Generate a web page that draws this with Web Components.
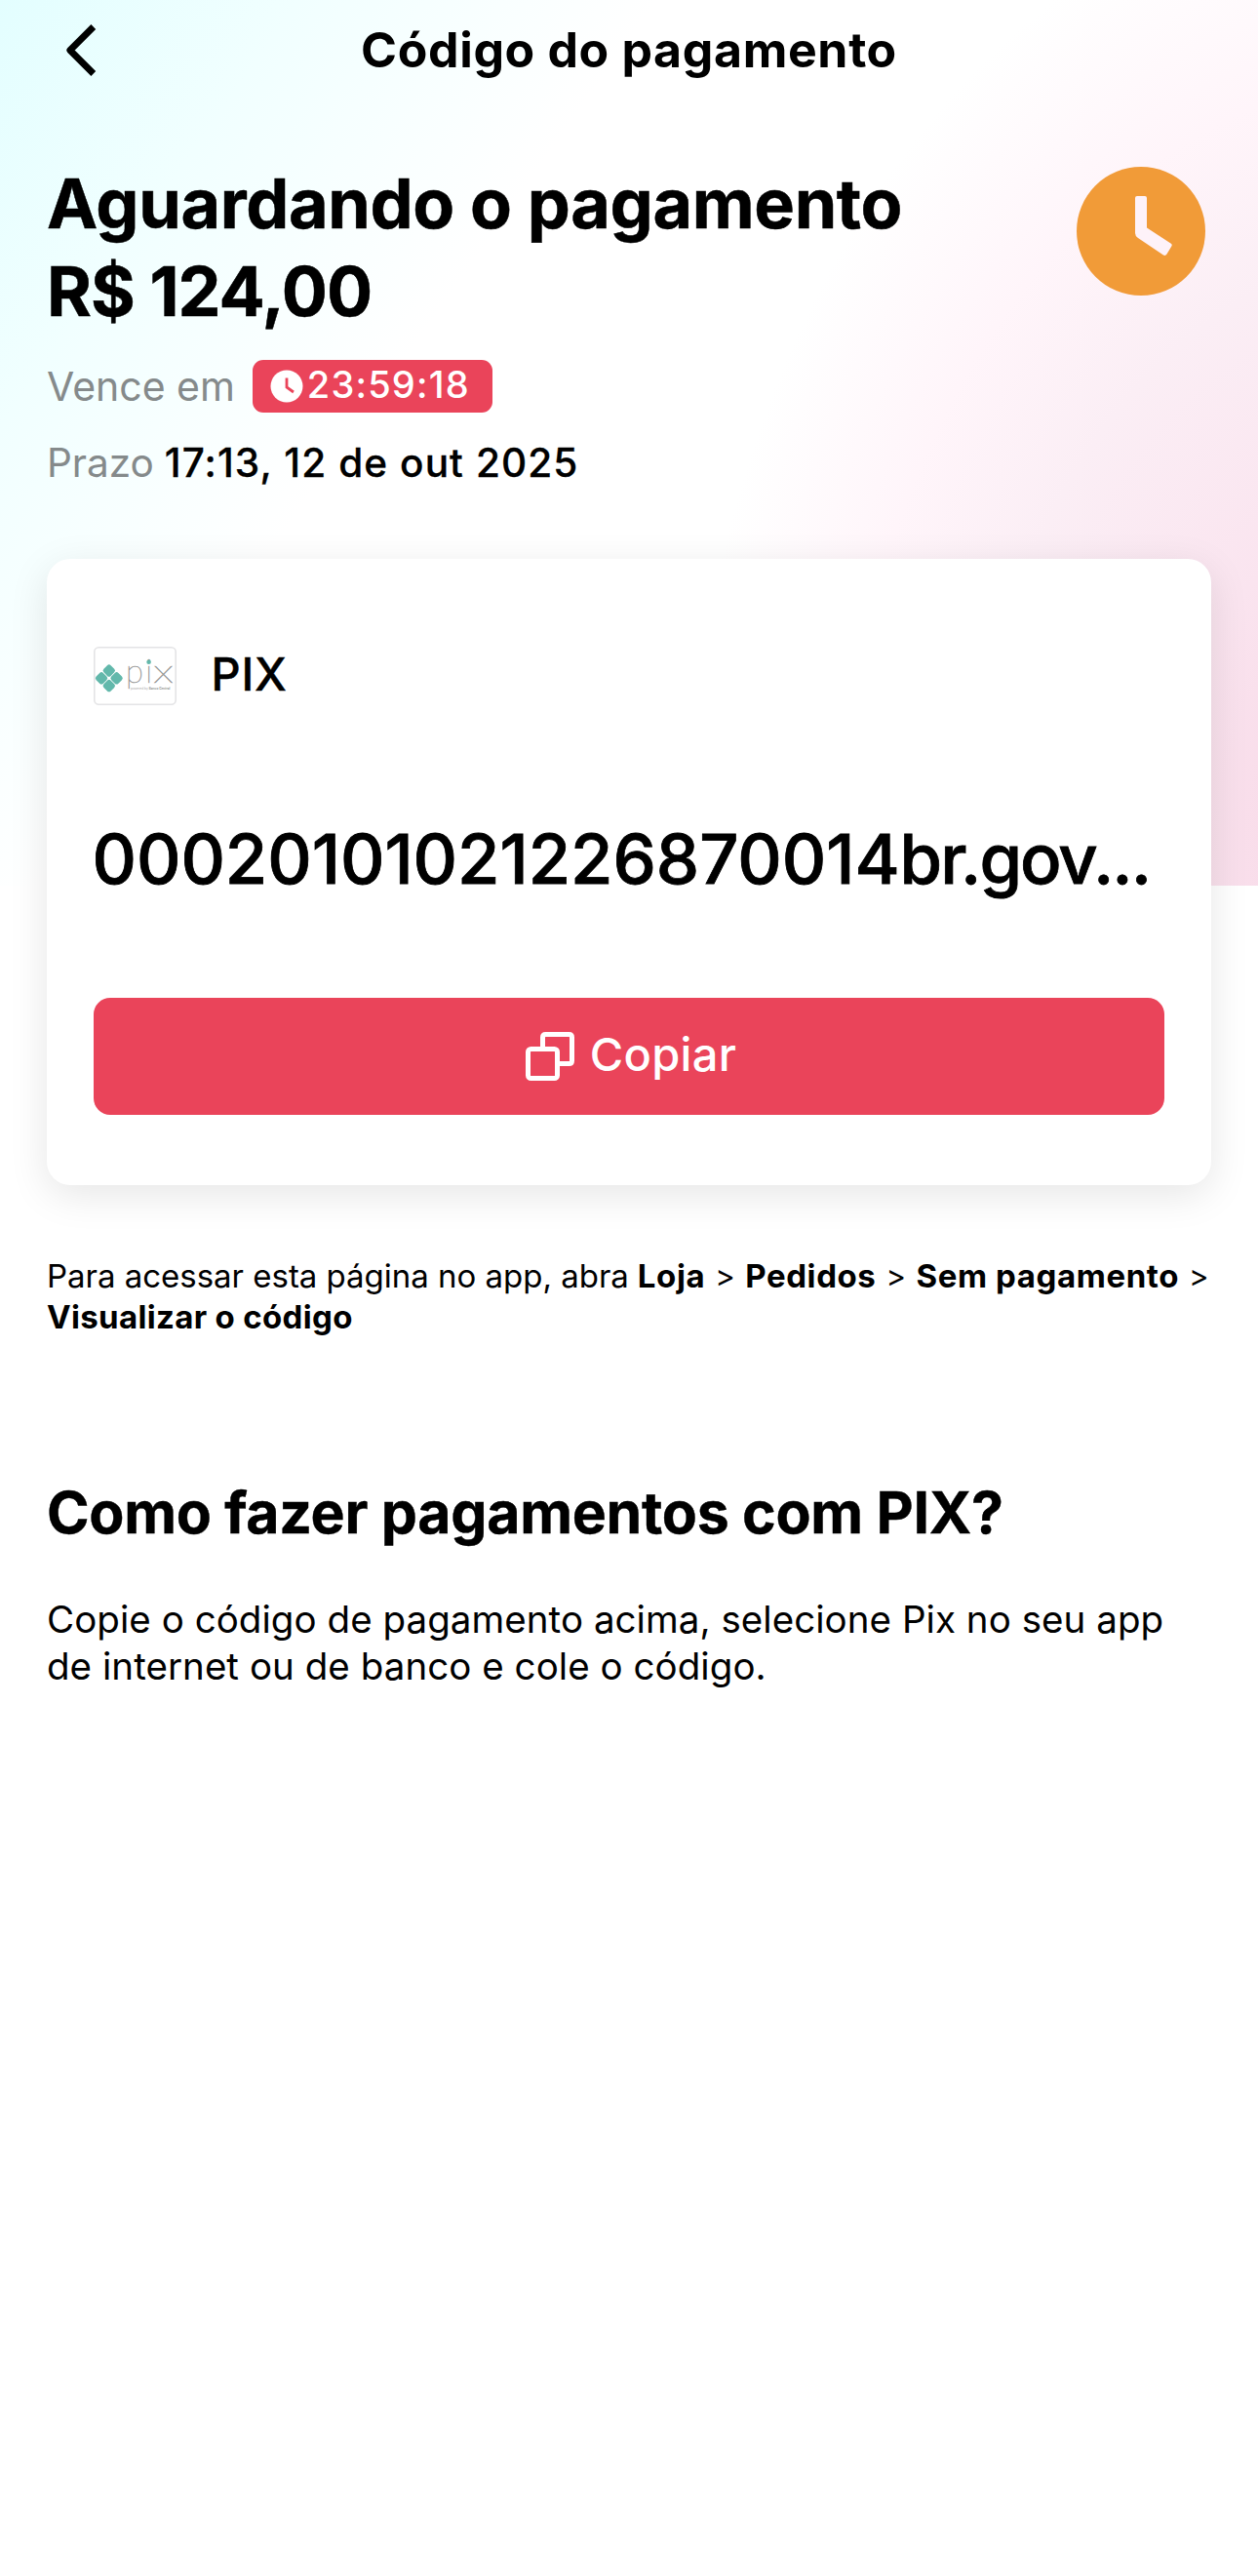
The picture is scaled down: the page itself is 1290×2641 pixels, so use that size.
<!DOCTYPE html>
<html lang="pt-BR">
<head>
<meta charset="utf-8">
<title>Código do pagamento</title>
<style>
  html, body { margin: 0; background: #fff; }
  body { font-family: Inter, "Liberation Sans", sans-serif; color: #000; min-height: 2641px; }
</style>
</head>
<body>
<payment-page>
  <page-header slot="header">Código do pagamento</page-header>
  <payment-status slot="status">
    <span slot="title">Aguardando o pagamento</span>
    <span slot="amount">R$ 124,00</span>
    <span slot="due-label">Vence em</span>
    <countdown-pill slot="countdown">23:59:18</countdown-pill>
    <span slot="deadline-label">Prazo</span>
    <span slot="deadline">17:13, 12 de out 2025</span>
  </payment-status>
  <payment-card>
    <pix-logo slot="logo"></pix-logo>
    <span slot="method">PIX</span>
    <span slot="code">00020101021226870014<span style="letter-spacing:-2px">br.gov...</span></span>
    <copy-button slot="action">Copiar</copy-button>
  </payment-card>
  <path-note></path-note>
  <help-section>
    <span slot="title">Como fazer pagamentos com PIX?</span>
    <span slot="line1">Copie o código de pagamento acima, selecione Pix no seu app</span>
    <span slot="line2">de internet ou de banco e cole o código.</span>
  </help-section>
</payment-page>

<script>
const define = (name, html) => {
  const template = document.createElement('template');
  template.innerHTML = html;
  customElements.define(name, class extends HTMLElement {
    constructor() {
      super();
      this.attachShadow({ mode: 'open' }).append(template.content.cloneNode(true));
    }
  });
};

define('payment-page', `
  <style>
    :host { display: block; min-height: 2641px; box-sizing: border-box;
      background:
        radial-gradient(800px 1060px at 1460px 860px, #f8dae8 16%, #fae4ef 33%, #fbeef5 57%, #fff5fa 74%, rgba(255,255,255,0) 94%) 0 0 / 100% 908px no-repeat,
        linear-gradient(125deg, #e3feff 0%, #f1ffff 16%, #fff 35%) 0 0 / 100% 908px no-repeat #fff; }
    main { padding: 62px 48px 0; }
  </style>
  <slot name="header"></slot>
  <main><slot name="status"></slot><slot></slot></main>`);

define('page-header', `
  <style>
    :host { display: grid; grid-template-columns: 140px 1fr 140px; align-items: center; height: 102px; }
    svg { display: block; margin-left: 60px; }
    h1 { margin: 0; text-align: center; font-size: 50px; line-height: 101px; font-weight: 700; letter-spacing: .65px; white-space: nowrap; }
  </style>
  <svg width="48" height="60" viewBox="0 0 48 60" fill="none" stroke="#000" stroke-width="6.800" stroke-linejoin="round"><path d="M35.800 6.500 11.800 30.500l24 24"/></svg>
  <h1><slot></slot></h1>`);

define('payment-status', `
  <style>
    :host { display: flex; justify-content: space-between; align-items: flex-start; height: 409px; }
    h2 { margin: 0; font-size: 70px; line-height: 90px; font-weight: 700; white-space: nowrap; -webkit-text-stroke: .5px; }
    .t { display: block; letter-spacing: -.35px; }
    .a { display: block; letter-spacing: -1px; }
    .row { display: flex; align-items: center; height: 54px; font-size: 41px; white-space: nowrap; }
    .due { margin-top: 25px; gap: 18px; }
    .dead { margin-top: 24px; font-size: 40.5px; gap: 11px; }
    .label { color: #858a8b; letter-spacing: -.03px; }
    .date { font-weight: 500; letter-spacing: 1.1px; -webkit-text-stroke: .3px; }
    svg { display: block; margin: 7px 6px 0 0; }
  </style>
  <div>
    <h2><span class="t"><slot name="title"></slot></span><span class="a"><slot name="amount"></slot></span></h2>
    <div class="row due"><span class="label"><slot name="due-label"></slot></span><slot name="countdown"></slot></div>
    <div class="row dead"><span class="label"><slot name="deadline-label"></slot></span><span class="date"><slot name="deadline"></slot></span></div>
  </div>
  <svg width="132" height="132" viewBox="0 0 132 132"><circle cx="66" cy="66" r="66" fill="#f19b38"/><path d="M62 30h8q2 0 2 2v30.500l24.500 16q2 1.300.8 3L92.500 89.600q-1.500 2.200-3.500.9L63 73q-3-2-3-5V32q0-2 2-2z" fill="#fef2f9"/></svg>`);

define('countdown-pill', `
  <style>
    :host { display: flex; align-items: center; box-sizing: border-box; width: 246px; height: 54px; padding-left: 18px; border-radius: 11px; background: #ea445a; color: #fff; }
    svg { display: block; flex: none; }
    span { font-size: 38px; line-height: 50px; font-weight: 500; letter-spacing: 1.2px; margin: -4px 0 0 4px; }
  </style>
  <svg width="34" height="34" viewBox="0 0 34 34"><circle cx="17" cy="17" r="16.500" fill="#fff"/><path d="M17 8.500v9.500l7 5" fill="none" stroke="#ea445a" stroke-width="2.800"/></svg>
  <span><slot></slot></span>`);

define('pix-logo', `
  <style>:host { display: block; letter-spacing: 0; -webkit-text-stroke: 0; } svg { display: block; }</style>
  <svg width="85" height="60" viewBox="0 0 85 60">
    <rect x=".8" y=".8" width="83.400" height="58.400" rx="4.500" fill="#fff" stroke="#e4e4e6" stroke-width="1.600"/>
    <g transform="translate(15.800 32.300) rotate(45)" fill="#62b8ab">
      <rect x="-10.600" y="-10.600" width="10.200" height="10.200" rx="2.600"/>
      <rect x=".4" y="-10.600" width="10.200" height="10.200" rx="2.600"/>
      <rect x="-10.600" y=".4" width="10.200" height="10.200" rx="2.600"/>
      <rect x=".4" y=".4" width="10.200" height="10.200" rx="2.600"/>
    </g>
    <text y="37" font-family="Lato, Inter, sans-serif" font-weight="100" font-size="33" fill="#777" stroke="#999" stroke-width=".5"><tspan x="33">p</tspan><tspan x="53.200">i</tspan><tspan x="61" textLength="21" lengthAdjust="spacingAndGlyphs">x</tspan></text>
    <circle cx="56.600" cy="15.800" r="2.300" fill="#62b8ab"/>
    <text x="38" y="44.300" font-family="Inter, sans-serif" font-size="3.200" fill="#aaa">powered by <tspan font-weight="600" fill="#888">Banco Central</tspan></text>
  </svg>`);

define('payment-card', `
  <style>
    :host { display: block; box-sizing: border-box; height: 642px; padding: 90px 48px 72px; border-radius: 24px; background: #fff; box-shadow: 0 10px 40px rgba(0,0,0,.1); }
    .method { display: flex; align-items: center; gap: 35.500px; height: 60px; }
    .method span { margin-top: -6px; font-size: 47px; font-weight: 500; letter-spacing: .8px; -webkit-text-stroke: .4px; }
    .code { font-size: 70.500px; line-height: 100px; font-weight: 500; letter-spacing: -.05px; margin: 107.500px -48px 92.500px -1.500px; white-space: nowrap; -webkit-text-stroke: .8px; }
  </style>
  <div class="method"><slot name="logo"></slot><span><slot name="method"></slot></span></div>
  <div class="code"><slot name="code"></slot></div>
  <slot name="action"></slot>`);

define('copy-button', `
  <style>
    :host { display: block; }
    button { display: flex; align-items: center; justify-content: center; gap: 16px; width: 100%; height: 120px; padding: 0 0 0 4px; border: 0; border-radius: 17px; background: #ea445a; color: #fff; font: 500 47px Inter, sans-serif; letter-spacing: .3px; }
    span { margin-top: -5px; }
  </style>
  <button><svg width="50" height="50" viewBox="0 0 50 50" fill="none" stroke="#fff" stroke-width="5"><rect x="2.500" y="17.500" width="30" height="30" rx="3"/><path d="M17.500 17.500v-12q0-3 3-3h24q3 0 3 3v24q0 3-3 3h-12"/></svg><span><slot></slot></span></button>`);

define('path-note', `
  <style>
    :host { display: block; margin-top: 72px; font-size: 33px; line-height: 42px; white-space: nowrap; }
    div { display: flex; }
    b { font-weight: 700; letter-spacing: .6px; }
    .intro { letter-spacing: -.02px; margin-right: 9px; }
    .sep { width: 20px; text-align: center; margin: 0 11px 0 10px; font-size: 31px; }
    .last { letter-spacing: .33px; }
  </style>
  <div><span class="intro">Para acessar esta página no app, abra</span><b>Loja</b><span class="sep">&gt;</span><b>Pedidos</b><span class="sep">&gt;</span><b>Sem pagamento</b><span class="sep">&gt;</span></div>
  <div><b class="last">Visualizar o código</b></div>`);

define('help-section', `
  <style>
    :host { display: block; margin-top: 145px; white-space: nowrap; }
    h2 { margin: 0 0 50px; font-size: 59px; line-height: 70px; font-weight: 700; letter-spacing: -.3px; -webkit-text-stroke: .4px; }
    p { margin: 0; font-size: 38.500px; line-height: 48px; letter-spacing: .05px; }
  </style>
  <h2><slot name="title"></slot></h2>
  <p><slot name="line1"></slot><br><slot name="line2"></slot></p>`);
</script>
</body>
</html>
